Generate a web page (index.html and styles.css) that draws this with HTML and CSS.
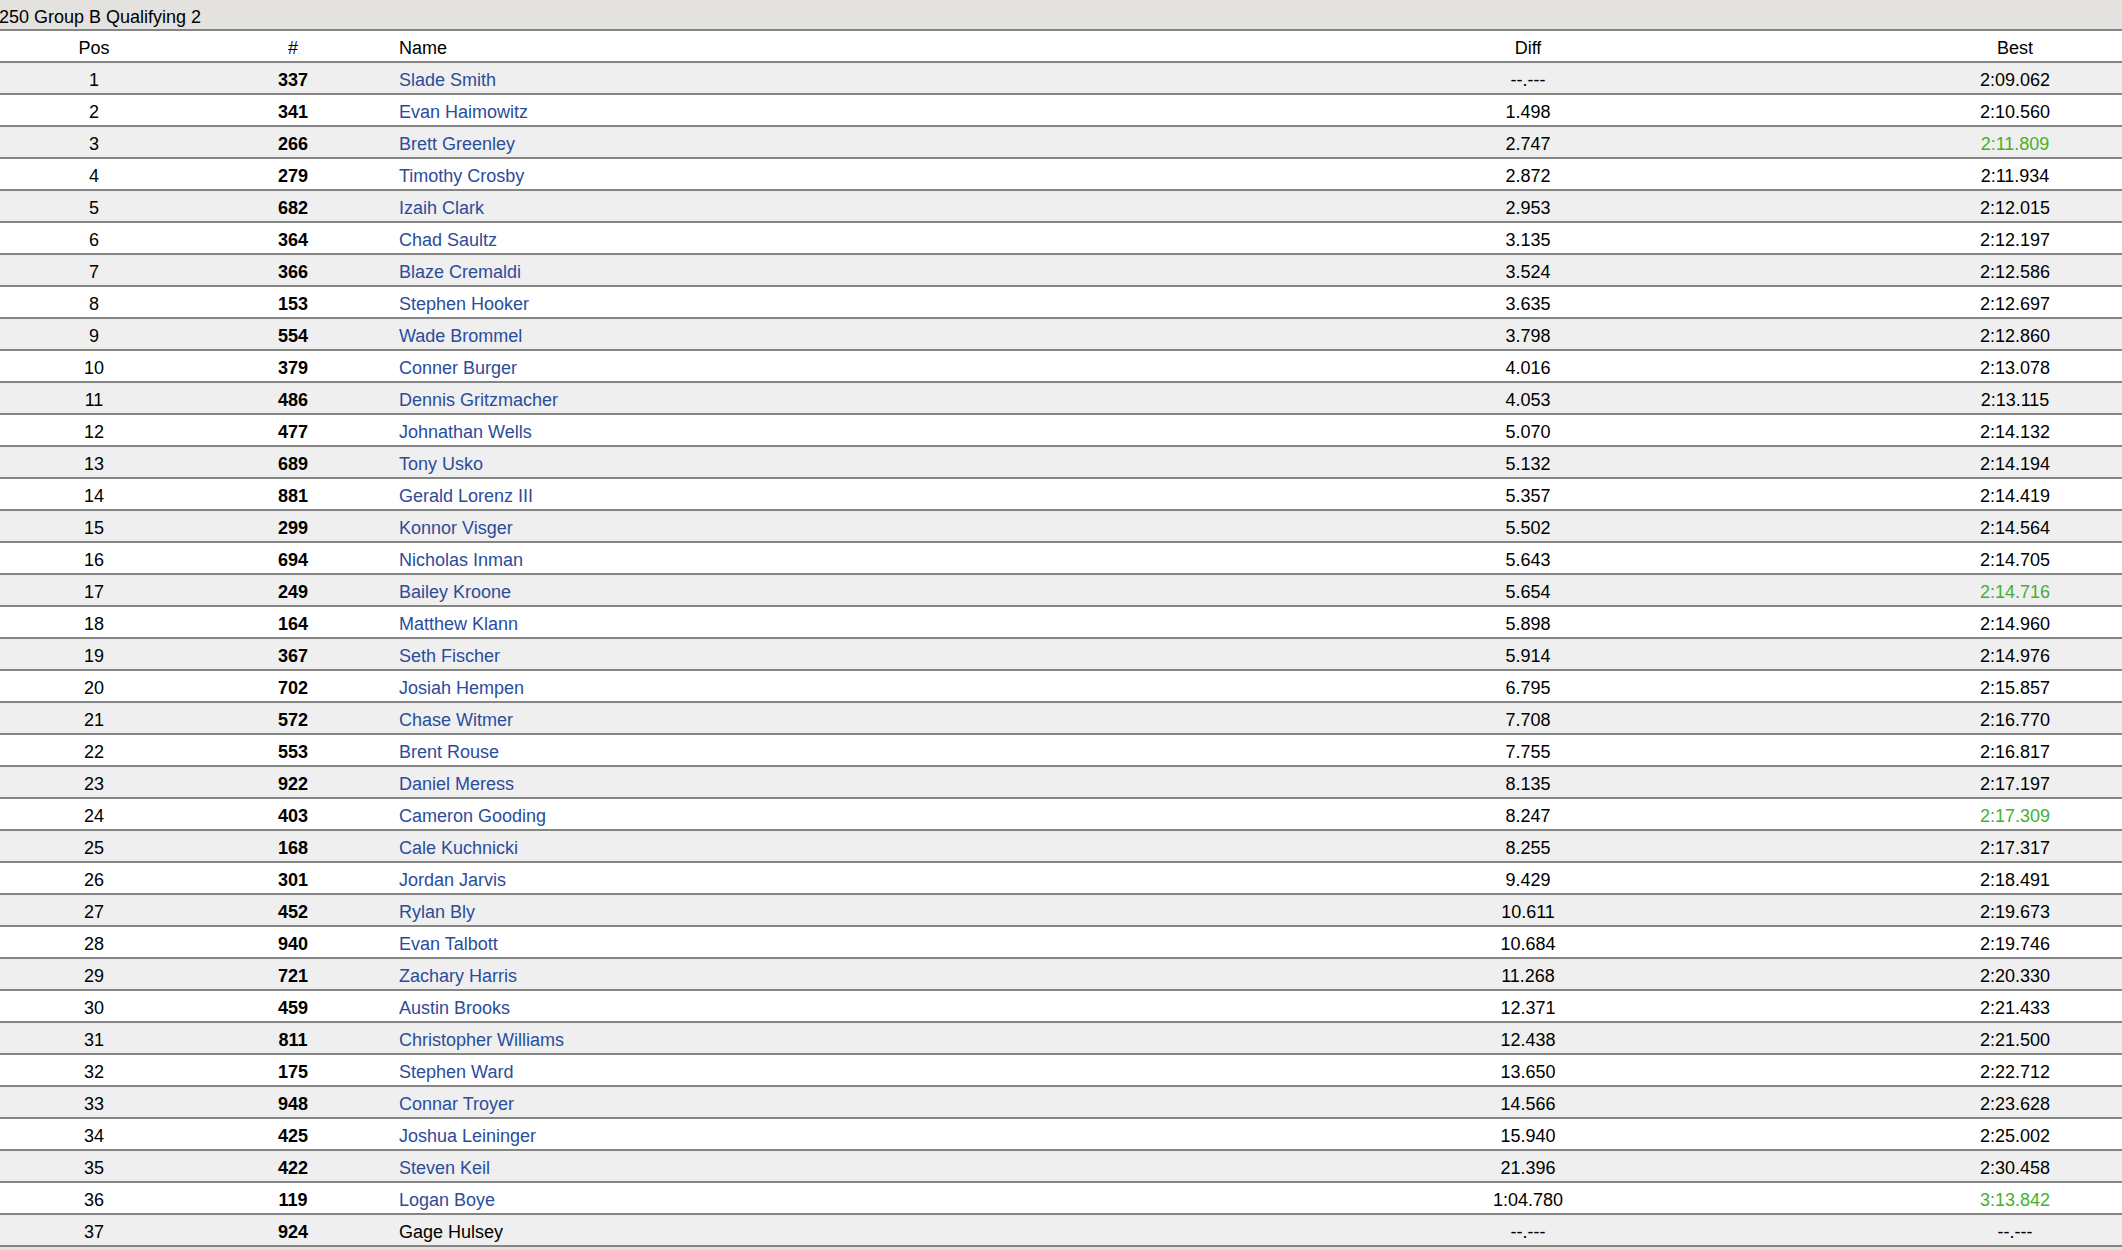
FILE: index.html
```html
<!DOCTYPE html>
<html>
<head>
<meta charset="utf-8">
<link rel="stylesheet" href="styles.css">
</head>
<body>
<div class="title">250 Group B Qualifying 2</div>
<table class="results">
<colgroup><col class="c-pos"><col class="c-num"><col class="c-name"><col class="c-diff"><col class="c-best"></colgroup>
<thead>
<tr><th class="pos">Pos</th><th class="num">#</th><th class="name">Name</th><th class="diff">Diff</th><th class="best">Best</th></tr>
</thead>
<tbody>
<tr><td class="pos">1</td><td class="num">337</td><td class="name"><a>Slade Smith</a></td><td class="diff">--.---</td><td class="best">2:09.062</td></tr>
<tr><td class="pos">2</td><td class="num">341</td><td class="name"><a>Evan Haimowitz</a></td><td class="diff">1.498</td><td class="best">2:10.560</td></tr>
<tr><td class="pos">3</td><td class="num">266</td><td class="name"><a>Brett Greenley</a></td><td class="diff">2.747</td><td class="best pb">2:11.809</td></tr>
<tr><td class="pos">4</td><td class="num">279</td><td class="name"><a>Timothy Crosby</a></td><td class="diff">2.872</td><td class="best">2:11.934</td></tr>
<tr><td class="pos">5</td><td class="num">682</td><td class="name"><a>Izaih Clark</a></td><td class="diff">2.953</td><td class="best">2:12.015</td></tr>
<tr><td class="pos">6</td><td class="num">364</td><td class="name"><a>Chad Saultz</a></td><td class="diff">3.135</td><td class="best">2:12.197</td></tr>
<tr><td class="pos">7</td><td class="num">366</td><td class="name"><a>Blaze Cremaldi</a></td><td class="diff">3.524</td><td class="best">2:12.586</td></tr>
<tr><td class="pos">8</td><td class="num">153</td><td class="name"><a>Stephen Hooker</a></td><td class="diff">3.635</td><td class="best">2:12.697</td></tr>
<tr><td class="pos">9</td><td class="num">554</td><td class="name"><a>Wade Brommel</a></td><td class="diff">3.798</td><td class="best">2:12.860</td></tr>
<tr><td class="pos">10</td><td class="num">379</td><td class="name"><a>Conner Burger</a></td><td class="diff">4.016</td><td class="best">2:13.078</td></tr>
<tr><td class="pos">11</td><td class="num">486</td><td class="name"><a>Dennis Gritzmacher</a></td><td class="diff">4.053</td><td class="best">2:13.115</td></tr>
<tr><td class="pos">12</td><td class="num">477</td><td class="name"><a>Johnathan Wells</a></td><td class="diff">5.070</td><td class="best">2:14.132</td></tr>
<tr><td class="pos">13</td><td class="num">689</td><td class="name"><a>Tony Usko</a></td><td class="diff">5.132</td><td class="best">2:14.194</td></tr>
<tr><td class="pos">14</td><td class="num">881</td><td class="name"><a>Gerald Lorenz III</a></td><td class="diff">5.357</td><td class="best">2:14.419</td></tr>
<tr><td class="pos">15</td><td class="num">299</td><td class="name"><a>Konnor Visger</a></td><td class="diff">5.502</td><td class="best">2:14.564</td></tr>
<tr><td class="pos">16</td><td class="num">694</td><td class="name"><a>Nicholas Inman</a></td><td class="diff">5.643</td><td class="best">2:14.705</td></tr>
<tr><td class="pos">17</td><td class="num">249</td><td class="name"><a>Bailey Kroone</a></td><td class="diff">5.654</td><td class="best pb">2:14.716</td></tr>
<tr><td class="pos">18</td><td class="num">164</td><td class="name"><a>Matthew Klann</a></td><td class="diff">5.898</td><td class="best">2:14.960</td></tr>
<tr><td class="pos">19</td><td class="num">367</td><td class="name"><a>Seth Fischer</a></td><td class="diff">5.914</td><td class="best">2:14.976</td></tr>
<tr><td class="pos">20</td><td class="num">702</td><td class="name"><a>Josiah Hempen</a></td><td class="diff">6.795</td><td class="best">2:15.857</td></tr>
<tr><td class="pos">21</td><td class="num">572</td><td class="name"><a>Chase Witmer</a></td><td class="diff">7.708</td><td class="best">2:16.770</td></tr>
<tr><td class="pos">22</td><td class="num">553</td><td class="name"><a>Brent Rouse</a></td><td class="diff">7.755</td><td class="best">2:16.817</td></tr>
<tr><td class="pos">23</td><td class="num">922</td><td class="name"><a>Daniel Meress</a></td><td class="diff">8.135</td><td class="best">2:17.197</td></tr>
<tr><td class="pos">24</td><td class="num">403</td><td class="name"><a>Cameron Gooding</a></td><td class="diff">8.247</td><td class="best pb">2:17.309</td></tr>
<tr><td class="pos">25</td><td class="num">168</td><td class="name"><a>Cale Kuchnicki</a></td><td class="diff">8.255</td><td class="best">2:17.317</td></tr>
<tr><td class="pos">26</td><td class="num">301</td><td class="name"><a>Jordan Jarvis</a></td><td class="diff">9.429</td><td class="best">2:18.491</td></tr>
<tr><td class="pos">27</td><td class="num">452</td><td class="name"><a>Rylan Bly</a></td><td class="diff">10.611</td><td class="best">2:19.673</td></tr>
<tr><td class="pos">28</td><td class="num">940</td><td class="name"><a>Evan Talbott</a></td><td class="diff">10.684</td><td class="best">2:19.746</td></tr>
<tr><td class="pos">29</td><td class="num">721</td><td class="name"><a>Zachary Harris</a></td><td class="diff">11.268</td><td class="best">2:20.330</td></tr>
<tr><td class="pos">30</td><td class="num">459</td><td class="name"><a>Austin Brooks</a></td><td class="diff">12.371</td><td class="best">2:21.433</td></tr>
<tr><td class="pos">31</td><td class="num">811</td><td class="name"><a>Christopher Williams</a></td><td class="diff">12.438</td><td class="best">2:21.500</td></tr>
<tr><td class="pos">32</td><td class="num">175</td><td class="name"><a>Stephen Ward</a></td><td class="diff">13.650</td><td class="best">2:22.712</td></tr>
<tr><td class="pos">33</td><td class="num">948</td><td class="name"><a>Connar Troyer</a></td><td class="diff">14.566</td><td class="best">2:23.628</td></tr>
<tr><td class="pos">34</td><td class="num">425</td><td class="name"><a>Joshua Leininger</a></td><td class="diff">15.940</td><td class="best">2:25.002</td></tr>
<tr><td class="pos">35</td><td class="num">422</td><td class="name"><a>Steven Keil</a></td><td class="diff">21.396</td><td class="best">2:30.458</td></tr>
<tr><td class="pos">36</td><td class="num">119</td><td class="name"><a>Logan Boye</a></td><td class="diff">1:04.780</td><td class="best pb">3:13.842</td></tr>
<tr><td class="pos">37</td><td class="num">924</td><td class="name">Gage Hulsey</td><td class="diff">--.---</td><td class="best">--.---</td></tr>
</tbody>
</table>
</body>
</html>
```
FILE: styles.css
```css
html, body {
  margin: 0;
  padding: 0;
  background: #e3e2de;
  font-family: "Liberation Sans", Arial, Helvetica, sans-serif;
  font-size: 18px;
  color: #000;
}
.title {
  height: 26px;
  padding-top: 3px;
  line-height: 29px;
  margin-left: -1px;
  border-bottom: 2px solid #858585;
  white-space: nowrap;
}
.results {
  width: 100%;
  border-collapse: collapse;
  table-layout: fixed;
  background: #fff;
}
.c-pos { width: 188px; }
.c-num { width: 210px; }
.c-name { width: 750px; }
.c-diff { width: 760px; }
.c-best { width: 214px; }
.results th,
.results td {
  box-sizing: content-box;
  height: 25px;
  padding: 5px 0 0 0;
  border-bottom: 2px solid #858585;
  vertical-align: middle;
  font-weight: normal;
  line-height: 25px;
  white-space: nowrap;
}
.results tbody tr:nth-child(odd) {
  background: #efefef;
}
.pos, .num, .diff, .best { text-align: center; }
.results .name { text-align: left; padding-left: 1px; }
.results td.num { font-weight: bold; }
.name a { color: #2b4c9c; text-decoration: none; }
.pb { color: #45b030; }
```
